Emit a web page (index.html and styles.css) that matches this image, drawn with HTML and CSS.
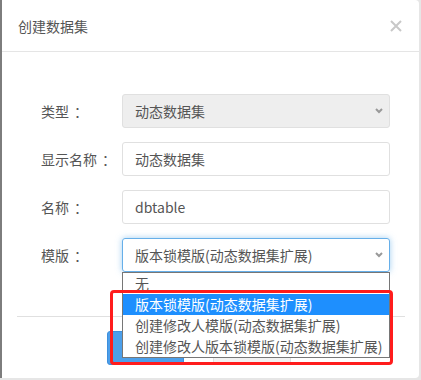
FILE: index.html
```html
<!DOCTYPE html>
<html lang="zh-CN">
<head>
    <meta charset="UTF-8">
    <meta name="viewport" content="width=device-width, initial-scale=1.0">
    <title>创建数据集</title>
    <link rel="stylesheet" href="styles.css">
</head>
<body>
    <div class="modal">
        <div class="modal-header">
            <span class="modal-title">创建数据集</span>
            <svg class="close" width="12" height="12" viewBox="0 0 12 12">
                <path d="M1 1L11 11M11 1L1 11" stroke="#c8c8c8" stroke-width="2" fill="none"/>
            </svg>
        </div>
        <div class="modal-body">
            <div class="form-row">
                <label class="form-label">类型<span class="colon">：</span></label>
                <div class="control select disabled">
                    <span>动态数据集</span>
                    <svg class="chevron" width="8" height="6" viewBox="0 0 8 6">
                        <path d="M1 1L4 4L7 1" stroke="#999" stroke-width="2" fill="none"/>
                    </svg>
                </div>
            </div>
            <div class="form-row">
                <label class="form-label">显示名称<span class="colon">：</span></label>
                <div class="control">动态数据集</div>
            </div>
            <div class="form-row">
                <label class="form-label">名称<span class="colon">：</span></label>
                <div class="control">dbtable</div>
            </div>
            <div class="form-row">
                <label class="form-label">模版<span class="colon">：</span></label>
                <div class="select-wrap">
                    <div class="control select focus">
                        <span>版本锁模版(动态数据集扩展)</span>
                        <svg class="chevron" width="8" height="6" viewBox="0 0 8 6">
                            <path d="M1 1L4 4L7 1" stroke="#999" stroke-width="2" fill="none"/>
                        </svg>
                    </div>
                    <ul class="options">
                        <li>无</li>
                        <li class="selected">版本锁模版(动态数据集扩展)</li>
                        <li>创建修改人模版(动态数据集扩展)</li>
                        <li>创建修改人版本锁模版(动态数据集扩展)</li>
                    </ul>
                    <div class="mark"></div>
                </div>
            </div>
        </div>
        <div class="modal-footer">
            <button class="btn btn-primary" aria-label="确定"></button>
            <button class="btn btn-default" aria-label="取消"></button>
        </div>
    </div>
</body>
</html>
```

FILE: styles.css
```css
body {
    margin: 0;
    background: #e6e6e6;
    font-family: "Noto Sans CJK SC", "Open Sans", sans-serif;
    font-size: 14px;
    color: #555;
}
.modal {
    width: 419px;
    height: 378px;
    box-sizing: border-box;
    background: #fff;
    border-left: 2px solid #7d7d7d;
    border-radius: 0 4px 4px 0;
    display: flex;
    flex-direction: column;
}
.modal-header {
    height: 51px;
    padding: 0 17px 0 16px;
    display: flex;
    align-items: center;
    justify-content: space-between;
    border-bottom: 1px solid #e5e5e5;
}
.modal-title {
    font-size: 14px;
    color: #555;
}
.modal-body {
    padding: 42px 0 0 39px;
    display: flex;
    flex-direction: column;
    gap: 14px;
}
.form-row {
    display: flex;
    align-items: center;
    height: 34px;
}
.form-label {
    width: 81px;
    color: #555;
}
.colon {
    margin-left: 5px;
}
.control {
    width: 268px;
    height: 34px;
    box-sizing: border-box;
    border: 1px solid #e0e0e0;
    border-radius: 3px;
    padding: 0 12px;
    display: flex;
    align-items: center;
    justify-content: space-between;
    color: #555;
}
.disabled {
    background: #eee;
}
.focus {
    border-color: #66afe9;
    box-shadow: 0 0 6px rgba(102, 175, 233, 0.6);
}
.chevron {
    margin-right: -6px;
}
.select-wrap {
    position: relative;
}
.options {
    position: absolute;
    top: 34px;
    left: 0;
    width: 268px;
    box-sizing: border-box;
    margin: 0;
    padding: 0;
    list-style: none;
    background: #fff;
    border: 1px solid #767676;
    z-index: 2;
}
.options li {
    height: 21px;
    line-height: 21px;
    padding-left: 12px;
    color: #555;
}
.options li.selected {
    background: #1e8ffe;
    color: #fff;
}
.mark {
    position: absolute;
    top: 52px;
    left: -12px;
    width: 283px;
    height: 75px;
    box-sizing: border-box;
    border: 3px solid #ff1c1c;
    border-radius: 4px;
    z-index: 3;
}
.modal-footer {
    margin: 44px 14px 0 15px;
    border-top: 1px solid #e0e0e0;
    padding: 14px 0 0 90px;
    display: flex;
    gap: 29px;
}
.btn {
    width: 77px;
    height: 34px;
    border-radius: 3px;
    font-family: inherit;
    font-size: 14px;
}
.btn-primary {
    background: #4c9fea;
    border: 1px solid #3d8fdc;
    color: #fff;
}
.btn-default {
    width: 78px;
    background: #f2f2f2;
    border: 1px solid #e0e0e0;
    color: #555;
}
```
